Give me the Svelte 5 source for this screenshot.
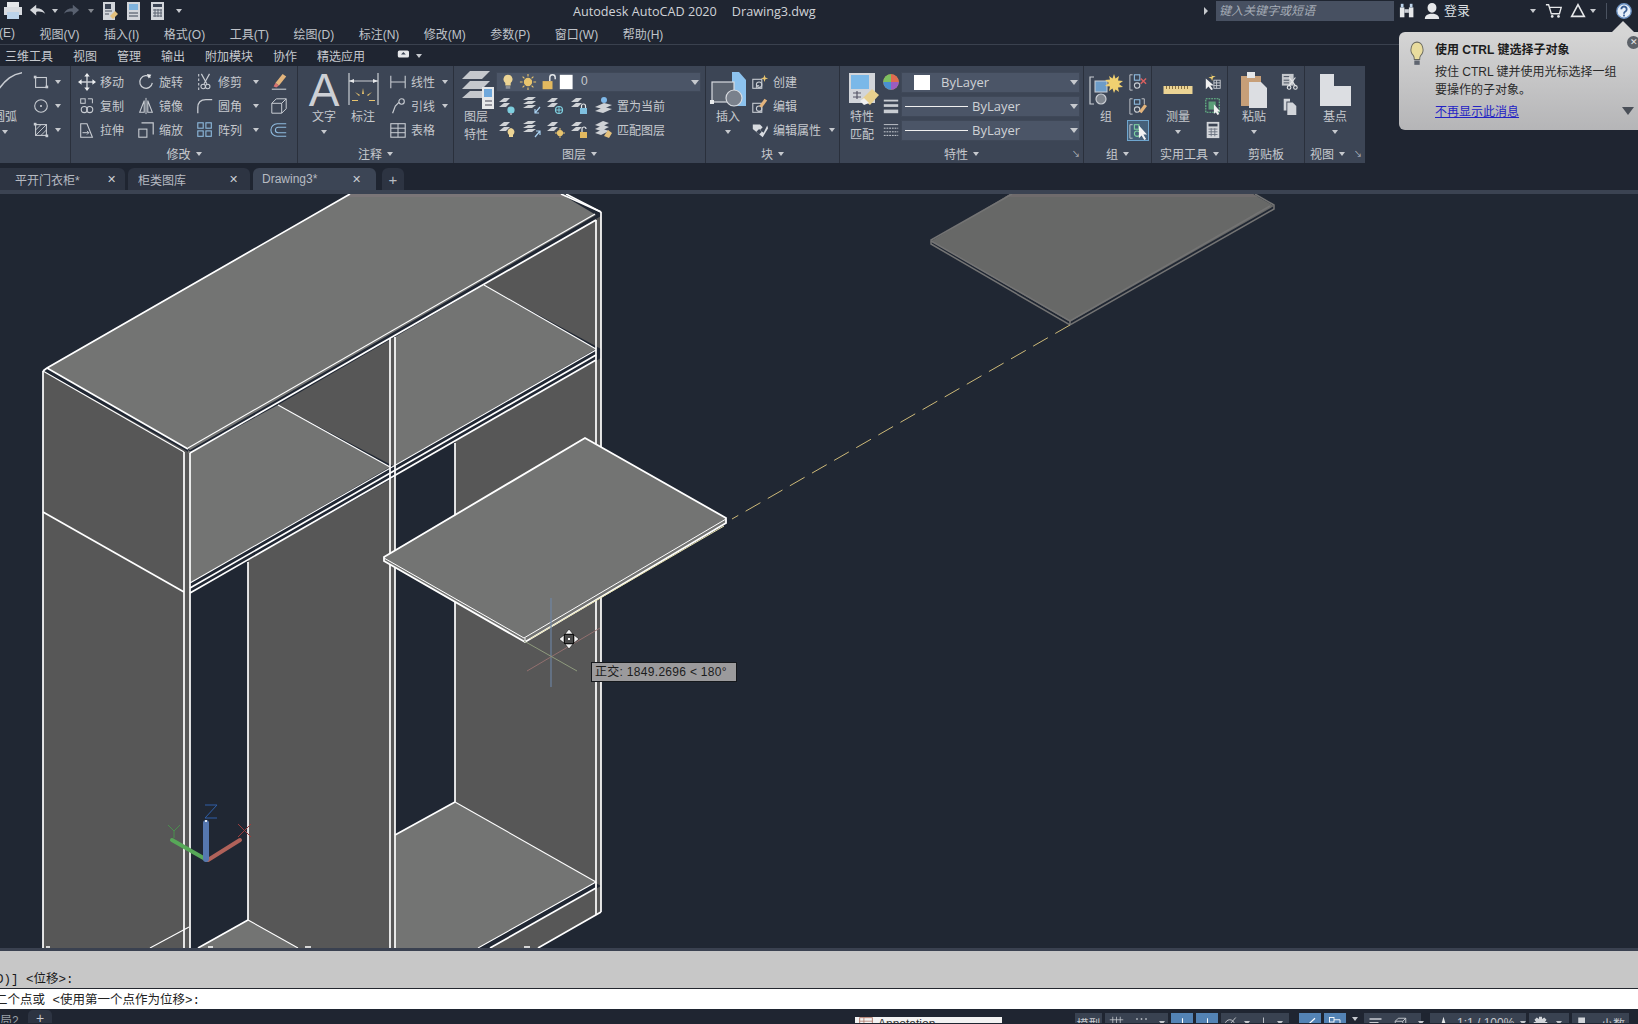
<script>
  const c = '#c9cdd3';
  const L = (d, s = c, w = 1.3) => `<path d="${d}" fill="none" stroke="${s}" stroke-width="${w}"/>`;
  const F = (d, f = c) => `<path d="${d}" fill="${f}"/>`;
  const R = (x, y, w, h, f = c) => `<rect x="${x}" y="${y}" width="${w}" height="${h}" fill="${f}"/>`;
  const O = (x, y, w, h, s = c, sw = 1.2) => `<rect x="${x}" y="${y}" width="${w}" height="${h}" fill="none" stroke="${s}" stroke-width="${sw}"/>`;
  const Ci = (x, y, r, s = c, f = 'none') => `<circle cx="${x}" cy="${y}" r="${r}" fill="${f}" stroke="${s}" stroke-width="1.2"/>`;
  const layerBase = F('M1 6h7l4-4H6zM1 11h7l4-4H6z', '#cfd2d6');
  const I = {
    print: R(4,1,12,5,'#e5e7ea') + R(1,6,18,8,'#d8dbe0') + R(4,11,12,7,'#bcd3ea'),
    undo: F('M1 9l7-6v4c5 0 8 2 10 6-3-2-6-3-10-2v4z','#d5d8dc'),
    redo: F('M19 9l-7-6v4c-5 0-8 2-10 6 3-2 6-3 10-2v4z','#596170'),
    qa1: R(4,1,12,18,'#d2d5da') + R(6,3,6,5,'#3b4454') + L('M6 10h7M6 13h4','#4a5260',1) + F('M11 15l5-5 3 3-5 5z','#e3c07c'),
    qa2: R(4,1,13,18,'#d2d5da') + R(6,3,9,6,'#7fb3dd') + L('M6 12h9M6 15h9','#3b4454',1),
    qa3: R(4,1,13,18,'#d2d5da') + R(6,3,9,3,'#3b4454') + L('M6 9h9M6 12h9M6 15h9M8 8v8M11 8v8M14 8v8','#5a6270',1),
    arc: L('M0 17C6 8 12 3 22 2',c,1.3) + R(20,0,3,3,'#e8eaec'),
    rect: O(4,5,12,11) + R(2,3,3,3) + R(15,14,3,3),
    circ: Ci(10,10,7) + R(9,9,2,2),
    hatch: O(4,4,12,12) + L('M4 10l6-6M4 16L16 4M10 16l6-6',c,1) + R(2,2,3,3) + R(15,15,3,3),
    move: L('M10 2v16M2 10h16',c,1.6) + F('M10 0l3 4H7zM10 20l3-4H7zM0 10l4-3v6zM20 10l-4-3v6z','#eceef0'),
    rot: L('M15 5a7 7 0 1 0 2 6',c,1.4) + F('M11 1l5 1-3 4z','#e6e8ea'),
    trim: L('M6 1l6 11M15 1L9 12',c,1.3) + Ci(8,15,2.5) + Ci(13,15,2.5) + `<path d="M3 1v18" fill="none" stroke="${c}" stroke-width="1.2" stroke-dasharray="3 2"/>`,
    eraser: F('M14 1l4 3-8 10-4-3z','#e3b47c') + F('M6 11l4 3-3 2-3-1z','#d87272') + L('M2 18h16',c,1.2),
    copy: O(3,2,5,5,c,1.1) + L('M11 2h5v5',c,1.1) + Ci(7,14,3.4) + Ci(13,14,3.4),
    mirror: L('M10 1v18',c,1.1) + L('M8 4L3 17h5zM12 4l5 13h-5z',c,1.2),
    fillet: L('M2 18v-6q0-9 9-9h7',c,1.4),
    stretch: L('M3 3h7l6 15H3z',c,1.2) + L('M5 13h7m-2-2l2 2-2 2',c,1.1),
    scale: O(2,9,9,9) + L('M5 2h13v13',c,1.3),
    array: O(2,2,6,6,'#8fbce0') + O(11,2,6,6,'#8fbce0') + O(2,11,6,6,'#8fbce0') + O(11,11,6,6,'#8fbce0'),
    box3: L('M2 7h11v11H2zM2 7l5-5h11v11l-5 5M13 7l5-5',c,1.1),
    off: L('M18 3H8a7 7 0 0 0 0 14h10M18 7H9a3 3 0 0 0 0 6h9','#8fbce0',1.2),
    dimbig: L('M2 0v32M31 0v32M2 8h29',c,1.2) + F('M2 8l5-2v4zM31 8l-5-2v4z','#e6e8ea') + F('M16 15l1 6h-2zM8 19l5 3-1 1zM25 19l-5 3 1 1zM5 27h6v1H5zM22 27h6v1h-6z','#e8c46e'),
    lin: L('M2 3v14M18 3v14M2 10h16',c,1.2),
    lead: L('M4 18l3-8 4-4',c,1.3) + Ci(14,5,3),
    table: O(2,3,16,15) + L('M2 8h16M2 13h16M10 3v15',c,1.1),
    layers: F('M12 0h20l-8 8H4zM12 10h20l-8 8H4zM12 20h18l-6 7H4z','#c5c8cd') + R(24,16,12,22,'#e6e8ea') + R(26,18,8,8,'#6fa8dc') + L('M27 30h7M27 34h7','#445',1.1),
    bulb: F('M10 2a5 5 0 0 1 3 9v3H7v-3a5 5 0 0 1 3-9z','#ecd494') + R(7.5,14.5,5,3,'#8a8f98'),
    sun: Ci(10,10,4,'#e8c46e','#e8c46e') + L('M10 1v3M10 16v3M1 10h3M16 10h3M4 4l2 2M14 14l2 2M4 16l2-2M14 6l2-2','#e8c46e',1.2),
    lock: R(4,9,11,9,'#e3b95f') + L('M12 9V5a3 3 0 0 1 6 0v2','#e6e8ea',1.6),
    w: R(1,1,16,18,'#ffffff'),
    l1: layerBase + Ci(13,14,3,'#7fd0e0','#7fd0e0') + R(12,17,2,2,'#99a'),
    l2: F('M1 4h9l4-3H6zM1 8h9l4-3H6zM1 12h9l4-3H6z','#cfd2d6') + L('M18 11l-5 6m0-4v4h4','#a8d0f0',1.2),
    l3: layerBase + Ci(13,14,3.5,'#7fd0e0') + L('M13 10v8M9.5 14h7','#7fd0e0',1),
    l4: layerBase + R(10,12,7,6,'#7fc0e0') + L('M11.5 12V10a2 2 0 0 1 4 0v2','#e6e8ea',1.2),
    l5: F('M10 1a3 3 0 0 1 3 3 3 3 0 0 1-6 0 3 3 0 0 1 3-3z','#7fb8e8') + F('M1 11l9-4 8 2-9 4zM1 15l9-4 8 2-9 4z','#cfd2d6'),
    l6: layerBase + F('M13 8a4 4 0 0 1 2 7v2h-4v-2a4 4 0 0 1 2-7z','#ecd494'),
    l7: F('M1 4h9l4-3H6zM1 8h9l4-3H6zM1 12h9l4-3H6z','#cfd2d6') + L('M13 17l5-6m0 4v-4h-4','#a8d0f0',1.2),
    l8: layerBase + Ci(14,13,2.5,'#e8c46e','#e8c46e') + L('M14 8v2M14 16v2M9 13h2M17 13h2','#e8c46e',1),
    l9: layerBase + R(10,12,7,6,'#e3b95f') + L('M12 12V9a2 2 0 0 1 4 0','#e6e8ea',1.2),
    l10: F('M1 5l8-4 6 2-8 4zM1 9l8-4 6 2-8 4zM1 13l8-4 6 2-8 4z','#cfd2d6') + F('M10 16l4-6 4 3-3 5z','#e3c07c'),
    insert: F('M22 0h7l7 8v26H22z','#8cc2ee') + R(2,10,22,20,'#5c6470') + O(2,10,22,20,'#d8dbe0',1.2) + Ci(24,26,8,'#d8dbe0','#7a818c') + R(0,28,4,4,'#e8eaec'),
    create: O(2,7,10,10) + L('M6 17v-3h3',c,1) + Ci(9,13,3) + F('M15 2l1 3 3 1-3 1-1 3-1-3-3-1 3-1z','#e8c46e'),
    edit: O(2,7,10,10) + Ci(9,13,3) + F('M15 2l3 2-6 8-3-2z','#e3b47c'),
    attr: F('M2 4h8l3 3-3 3 4 3 4-8 1 3-6 10-11-9z','#d8dbe0') + F('M9 9l3 3-3 3-3-3z','#3b4454'),
    match: R(0,0,26,30,'#d2d5da') + R(2,2,18,14,'#7ab8e8') + L('M4 20h8M4 24h8M8 18v8','#556',1.2) + F('M13 26l10-10 7 6-9 10z','#e8d08e') + F('M11 28l4-3 5 5-5 2z','#f0f0f0'),
    wheel: `<circle cx="10" cy="10" r="8.6" fill="#c8a050"/>` + F('M10 10V1.4A8.6 8.6 0 0 1 18.6 10z','#e06a50') + F('M10 10h8.6A8.6 8.6 0 0 1 10 18.6z','#9c5cc0') + F('M10 10v8.6A8.6 8.6 0 0 1 1.4 10z','#4a90d0') + F('M10 10H1.4A8.6 8.6 0 0 1 10 1.4z','#7dc060'),
    lw: R(2,3,16,2) + R(2,8,16,3) + R(2,14,16,4),
    lt: L('M2 4h16','#c9cdd3',1) + `<path d="M2 8h16M2 12h16M2 16h16" fill="none" stroke="#c9cdd3" stroke-dasharray="2 1" stroke-width="1.1"/>`,
    group: L('M5 3H1v27h4',c,1.2) + R(6,7,12,11,'#6c9cc8') + O(6,7,12,11,'#c9cdd3',1) + Ci(12,25,5,'#c9cdd3','#80868f') + F('M25 0l1.500 4.500L30 2l-1 4.500 5 .5-4 3 4 3-5 .5 1 4.500-3.500-2.500L25 19l-1.500-4.500L20 17l1-4.500-5-.5 4-3-4-3 5-.5L20 2l3.500 2.500z','#f0d070'),
    ung: L('M4 2H1v17h3',c,1) + O(6,2,6,6,'#8fbce0') + Ci(9,14,3,'#c9cdd3') + L('M13 6l6 6m0-6l-6 6','#d86060',1.6),
    gedit: L('M4 2H1v17h3M14 2h3v6',c,1) + O(6,3,6,5,'#8fbce0') + Ci(9,14,3) + F('M17 8l3 2-6 8-3-2z','#e3b47c'),
    gsel: L('M4 3H1v15h3',c,1) + O(6,3,5,5,'#7fd0a0') + Ci(9,13,3,'#7fd0a0') + F('M11 4v14l3-3 3 5 2-1-3-5h4z','#f2f2f2'),
    ruler: R(0,1,29,8,'#ecd494') + L('M3 1v3M6 1v3M9 1v3M12 1v3M15 1v3M18 1v3M21 1v3M24 1v3','#8a7040',1),
    pick: F('M2 6v12l3-3 3 4 2-1-3-4h4z','#f0f0f0') + F('M7 0l2 4-4 1 3 1 1 3 1-4 3-1-4-1z','#f0d070') + O(11,8,7,9,'#c9cdd3',1) + L('M11 11h7M11 14h7M14 8v9',c,1),
    qsel: `<rect x="2" y="2" width="15" height="15" fill="none" stroke="#68c08a" stroke-dasharray="2 1" stroke-width="1.2"/>` + R(5,5,8,9,'#5a9e78') + F('M11 8v11l2-2 2 3 2-1-2-3h3z','#f0f0f0'),
    calc: R(3,1,14,18,'#d2d5da') + R(5,3,10,3,'#3b4454') + L('M5 9h10M5 12h10M5 15h10M8 8v9M12 8v9','#6a7280',1),
    paste: R(0,4,20,30,'#c79f78') + R(6,0,8,6,'#e6e8ea') + F('M8 10h12l6 6v20H8z','#dcdee2'),
    cut: R(1,1,13,13,'#c5c8cd') + L('M3 4h6M3 8h6M3 11h6','#3b4454',1) + L('M9 5l7 9M16 5l-7 9','#e6e8ea',1.2) + Ci(9,16,2,'#e6e8ea') + Ci(16,16,2,'#e6e8ea'),
    dup: F('M3 2h7v3H6v10H3z','#d2d5da') + F('M7 6h6l4 4v10H7z','#d2d5da'),
    base: F('M1 0h14v12h17v20H1z','#dcdee2'),
    bino: R(1,6,5,11,'#e6e8ea') + R(11,6,5,11,'#e6e8ea') + R(6,8,5,4,'#c9cdd3') + R(2,2,3,4,'#bcd3ea') + R(12,2,3,4,'#bcd3ea'),
    user: F('M10 1a4.5 5 0 0 1 0 11 4.5 5 0 0 1 0-11zM2 19q0-5 6-6h4q6 1 6 6z','#e6e8ea'),
    cart: L('M1 3h3l3 10h9l2-7H5','#e6e8ea',1.5) + `<circle cx="8" cy="16" r="1.5" fill="#e6e8ea"/><circle cx="15" cy="16" r="1.5" fill="#e6e8ea"/>`,
    tri: L('M10 3L3 16h14z','#e6e8ea',1.8),
    help: `<circle cx="10" cy="10" r="8" fill="#e6eef8" stroke="#6d93c4" stroke-width="1.5"/>` + L('M7 8a3 3 0 1 1 4.5 2.6c-1 .6-1.5 1-1.5 2.4','#3b5f94',2) + R(9,14,2,2,'#3b5f94'),
    tip: `<path d="M10 1a7 7 0 0 1 4 12.500c-1 1-1 2-1 3.500H7c0-1.500-.3-2.500-1-3.500A7 7 0 0 1 10 1z" fill="#e9dc9e" stroke="#66665c"/>` + R(7,18,6,4,'#5f6570'),
    cam: `<rect x="1" y="3" width="14" height="9" rx="2" fill="#e6e8ea"/><path d="M5 8h6L8 5z" fill="#3b4454"/>`,
    grid: L('M5 1v18M10 1v18M15 1v18M1 5h18M1 10h18M1 15h18',c,1),
    dots: `<g fill="${c}"><rect x="3" y="3" width="2" height="2"/><rect x="9" y="3" width="2" height="2"/><rect x="15" y="3" width="2" height="2"/></g>`,
    plus: L('M10 3v14M3 10h14','#fff',1.4),
    ell: L('M10 3v15h8','#fff',1.3),
    polar: Ci(9,11,6) + L('M3 18L17 2',c,1.2),
    axis: L('M10 2v8M10 10l-7 8M10 10l7 8',c,1.2),
    chk: L('M3 15L16 3','#fff',1.6),
    snap: O(2,2,6,6,'#fff') + L('M8 5h8v12','#fff',1.2),
    lines: R(2,3,16,2) + R(2,8,12,2) + R(2,13,16,2),
    cube: L('M3 7h10v11H3zM3 7l4-4h10v11l-4 4M13 7l4-4',c,1.2),
    anno: F('M10 1l5 17H5z','#e6e8ea'),
    gear: F('M8 1h4v3l3-2 3 3-2 3h3v4h-3l2 3-3 3-3-2v3H8v-3l-3 2-3-3 2-3H1V8h3L2 5l3-3 3 2z','#d2d5da'),
    dec: R(3,2,9,11,'#d2d5da') + R(3,14,5,4,'#d2d5da'),
    sheet: O(1,1,18,15,'#a76a5a') + L('M1 6h18M7 1v15','#a76a5a',1)
  };
  const menus = ['视图(V)', '插入(I)', '格式(O)', '工具(T)', '绘图(D)', '标注(N)', '修改(M)', '参数(P)', '窗口(W)', '帮助(H)'];
  const tabs = ['三维工具', '视图', '管理', '输出', '附加模块', '协作', '精选应用'];
  const light = '#737473';
  const dark = '#575757';
</script>

{#snippet ic(name, size = 18, vb = '0 0 20 20', cls = '')}
  <svg class="ic {cls}" width={size} height={size} viewBox={vb}>{@html I[name]}</svg>
{/snippet}
{#snippet tool(icon, label, arrow = false)}
  <div class="t">{@render ic(icon)}<span>{label}</span>{#if arrow}<i class="ar far"></i>{/if}</div>
{/snippet}
{#snippet big(icon, w, h, vb, lines, arrow = true)}
  <div class="big">
    <div class="bigicon"><svg width={w} height={h} viewBox={vb}>{@html I[icon]}</svg></div>
    {#each lines as l}<div class="bl">{l}</div>{/each}
    {#if arrow}<i class="ar"></i>{/if}
  </div>
{/snippet}
{#snippet title(text, arrow = true)}
  <div class="ptitle">{text}{#if arrow}<i class="ar tarr"></i>{/if}</div>
{/snippet}

<div class="app">
  <header class="titlebar">
    <div class="qat">
      {@render ic('print', 20)}
      {@render ic('undo', 18)}<i class="ar s"></i>
      {@render ic('redo', 18)}<i class="ar s dim"></i>
      {@render ic('qa1', 20)}{@render ic('qa2', 20)}{@render ic('qa3', 20)}<i class="ar eq"></i>
    </div>
    <div class="apptitle"><span>Autodesk AutoCAD 2020</span><span>Drawing3.dwg</span></div>
    <div class="topright">
      <i class="ar right"></i>
      <div class="search">键入关键字或短语</div>
      <span class="tb bino">{@render ic('bino', 18)}</span>
      <span class="tb userb">{@render ic('user', 18)}</span>
      <span class="login">登录</span>
      <i class="ar loginar"></i>
      <span class="tb cartb">{@render ic('cart', 18)}</span>
      <span class="tb trib">{@render ic('tri', 18)}</span>
      <i class="ar triar"></i>
      <span class="vsep"></span>
      <span class="tb helpb">{@render ic('help', 18)}</span>
    </div>
  </header>

  <nav class="menubar"><span class="clip">(E)</span>{#each menus as m}<span>{m}</span>{/each}</nav>

  <nav class="ribbontabs">
    {#each tabs as t}<span>{t}</span>{/each}
    <span class="camwrap">{@render ic('cam', 16)}<i class="ar"></i></span>
  </nav>

  <section class="ribbon">
    <div class="panel p-draw">
      <div class="body">
        <div class="big clipbig">
          <div class="bigicon arcbox">{@render ic('arc', 24)}</div>
          <div class="bl">圆弧</div>
          <i class="ar"></i>
        </div>
        <div class="rows">
          <div class="t">{@render ic('rect')}<i class="ar gap5"></i></div>
          <div class="t">{@render ic('circ')}<i class="ar gap5"></i></div>
          <div class="t">{@render ic('hatch')}<i class="ar gap5"></i></div>
        </div>
      </div>
    </div>

    <div class="panel p-mod">
      <div class="body">
        <div class="rows">{@render tool('move','移动')}{@render tool('copy','复制')}{@render tool('stretch','拉伸')}</div>
        <div class="rows">{@render tool('rot','旋转')}{@render tool('mirror','镜像')}{@render tool('scale','缩放')}</div>
        <div class="rows">{@render tool('trim','修剪',true)}{@render tool('fillet','圆角',true)}{@render tool('array','阵列',true)}</div>
        <div class="rows">
          <div class="t">{@render ic('eraser')}</div>
          <div class="t">{@render ic('box3')}</div>
          <div class="t">{@render ic('off')}</div>
        </div>
      </div>
      {@render title('修改')}
    </div>

    <div class="panel p-ann">
      <div class="body">
        <div class="big textbig"><div class="bigicon biga">A</div><div class="bl">文字</div><i class="ar"></i></div>
        {@render big('dimbig', 33, 34, '0 0 33 34', ['标注'], false)}
        <div class="rows">{@render tool('lin','线性',true)}{@render tool('lead','引线',true)}{@render tool('table','表格')}</div>
      </div>
      {@render title('注释')}
    </div>

    <div class="panel p-lay">
      <div class="body">
        {@render big('layers', 36, 38, '0 0 36 38', ['图层','特性'], false)}
        <div class="rows wide">
          <div class="combo layercombo">
            {@render ic('bulb')}{@render ic('sun')}{@render ic('lock')}{@render ic('w', 16)}
            <span class="zero">0</span>
            <i class="ar cbar"></i>
          </div>
          <div class="t lrow">{@render ic('l1')}{@render ic('l2')}{@render ic('l3')}{@render ic('l4')}{@render ic('l5')}<span>置为当前</span></div>
          <div class="t lrow">{@render ic('l6')}{@render ic('l7')}{@render ic('l8')}{@render ic('l9')}{@render ic('l10')}<span>匹配图层</span></div>
        </div>
      </div>
      {@render title('图层')}
    </div>

    <div class="panel p-blk">
      <div class="body">
        {@render big('insert', 36, 36, '0 0 36 36', ['插入'])}
        <div class="rows">{@render tool('create','创建')}{@render tool('edit','编辑')}{@render tool('attr','编辑属性',true)}</div>
      </div>
      {@render title('块')}
    </div>

    <div class="panel p-prop">
      <div class="body">
        {@render big('match', 30, 33, '0 0 30 33', ['特性','匹配'], false)}
        <div class="rows wide">
          <div class="t prow">{@render ic('wheel')}<div class="combo"><span class="swatch"></span><span class="bytext first">ByLayer</span><i class="ar cbar"></i></div></div>
          <div class="t prow">{@render ic('lw')}<div class="combo"><span class="lineprev"></span><span class="bytext">ByLayer</span><i class="ar cbar"></i></div></div>
          <div class="t prow">{@render ic('lt')}<div class="combo"><span class="lineprev"></span><span class="bytext">ByLayer</span><i class="ar cbar"></i></div></div>
        </div>
      </div>
      {@render title('特性')}
      <i class="expand">↘</i>
    </div>

    <div class="panel p-grp">
      <div class="body">
        {@render big('group', 34, 32, '0 0 34 32', ['组'], false)}
        <div class="rows">
          <div class="t c22">{@render ic('ung')}</div>
          <div class="t c22">{@render ic('gedit')}</div>
          <div class="t c22 sel">{@render ic('gsel')}</div>
        </div>
      </div>
      {@render title('组')}
    </div>

    <div class="panel p-util">
      <div class="body">
        {@render big('ruler', 30, 10, '0 0 29 10', ['测量'])}
        <div class="rows"><div class="t c20">{@render ic('pick')}</div><div class="t c20">{@render ic('qsel')}</div><div class="t c20">{@render ic('calc')}</div></div>
      </div>
      {@render title('实用工具')}
    </div>

    <div class="panel p-clip">
      <div class="body">
        {@render big('paste', 27, 36, '0 0 27 36', ['粘贴'])}
        <div class="rows"><div class="t c20">{@render ic('cut')}</div><div class="t c20">{@render ic('dup')}</div></div>
      </div>
      {@render title('剪贴板', false)}
    </div>

    <div class="panel p-view">
      <div class="body">
        {@render big('base', 32, 32, '0 0 32 32', ['基点'])}
      </div>
      <div class="ptitle vt">视图<i class="ar tarr"></i></div>
      <i class="expand">↘</i>
    </div>
  </section>

  <div class="doctabs">
    <div class="dt d1"><span>平开门衣柜*</span><b>✕</b></div>
    <div class="dt d2"><span>柜类图库</span><b>✕</b></div>
    <div class="dt active"><span>Drawing3*</span><b>✕</b></div>
    <div class="dt addtab">+</div>
  </div>
  <div class="strip"></div>

  <main class="canvas">
    <svg width="1638" height="754" viewBox="0 194 1638 754">
      <g fill={dark}>
        <polygon points="43,371 190,453 190,948 43,948"/>
        <polygon points="278,405 395,337 395,467"/>
        <polygon points="484,285 601,216 601,349"/>
        <polygon points="248,560 395,477 395,948 248,948"/>
        <polygon points="455,441 601,358 601,886 455,802"/>
        <polygon points="490,948 601,886 601,912 538,948"/>
      </g>
      <g fill={light}>
        <polygon points="47,368 350,194 561,194 596,215 190,450"/>
        <polygon points="190,453 278,405 390,467 190,583"/>
        <polygon points="395,337 484,285 596,349 395,465"/>
        <polygon points="395,835 455,802 596,882 478,948 395,948"/>
        <polygon points="248,920 198,948 298,948"/>
        <polygon points="188,450 191,452 191,455 188,453"/>
      </g>
      <polygon points="350,194 561,194 566,197 345,197" fill="#7b7678"/>
      <polygon points="1010,194 1253,194 1274,206 1070,322 931,241" fill="#676867"/>
      <polygon points="1010,194 1253,194 1258,197 1005,197" fill="#6f6b6c"/>
      <g fill="none" stroke="#747474" stroke-width="1.5">
        <polyline points="1012,194 931,240 931,244 1070,325 1274,209 1274,205 1255,194"/>
        <polyline points="931,241 1070,321 1270,206"/>
        <line x1="1070" y1="321" x2="1070" y2="325"/>
      </g>
      <line x1="1070" y1="325" x2="732" y2="519" stroke="#cdb978" stroke-width="1" stroke-dasharray="17 8.500"/>
      <g fill="none" stroke="#fff" stroke-width="1.7">
        <line x1="43" y1="371" x2="43" y2="948"/>
        <line x1="184" y1="452" x2="184" y2="948"/>
        <line x1="190" y1="453" x2="190" y2="948"/>
        <line x1="248" y1="562" x2="248" y2="920"/>
        <line x1="390" y1="338" x2="390" y2="948"/>
        <line x1="395" y1="337" x2="395" y2="948"/>
        <line x1="455" y1="443" x2="455" y2="802"/>
        <line x1="596" y1="220" x2="596" y2="915"/>
        <line x1="601" y1="212" x2="601" y2="912"/>
        <polyline points="43,371 47,368 350,194"/>
        <line x1="47" y1="368" x2="188" y2="449"/>
        <line x1="190" y1="453" x2="596" y2="220"/>
        <line x1="561" y1="194" x2="601" y2="212"/>
        <line x1="566" y1="194" x2="601" y2="212"/>
        <line x1="43" y1="512" x2="184" y2="592"/>
        <line x1="190" y1="593" x2="596" y2="360"/>
        <line x1="190" y1="588" x2="596" y2="355"/>
        <line x1="198" y1="948" x2="248" y2="920"/>
        <line x1="395" y1="835" x2="455" y2="802"/>
        <line x1="490" y1="948" x2="596" y2="888"/>
        <line x1="538" y1="948" x2="601" y2="912"/>
        <path d="M46 947h4M208 947h5M305 947h6M524 947h6"/>
      </g>
      <g fill="none" stroke="#fff" stroke-width="1.1">
        <line x1="43" y1="371" x2="184" y2="452"/>
        <line x1="188" y1="448" x2="595" y2="214"/>
        <line x1="190" y1="583" x2="596" y2="350"/>
        <line x1="278" y1="405" x2="390" y2="467"/>
        <line x1="484" y1="285" x2="596" y2="349"/>
        <line x1="248" y1="920" x2="298" y2="948"/>
        <line x1="455" y1="802" x2="596" y2="882"/>
        <line x1="478" y1="948" x2="596" y2="882"/>
        <line x1="150" y1="948" x2="189" y2="927"/>
        <line x1="596" y1="882" x2="596" y2="888"/>
      </g>
      <polygon points="384,557 585,438 726,518 726,523 525,642 384,561" fill={light}/>
      <g fill="none" stroke="#fff">
        <polygon points="384,557 585,438 726,518 726,523 525,642 384,561" stroke-width="1.8"/>
        <polyline points="384,558 524,638 726,519" stroke-width="1"/>
        <line x1="525" y1="638" x2="525" y2="642" stroke-width="1"/>
      </g>
      <line x1="530" y1="639" x2="724" y2="526" stroke="#e8e2b0" stroke-width="1"/>
      <line x1="551" y1="598" x2="551" y2="687" stroke="#6e87a8" stroke-width="1.1"/>
      <line x1="527" y1="671" x2="600" y2="628" stroke="#93706f" stroke-width="1"/>
      <line x1="524" y1="641" x2="577" y2="671" stroke="#8e9a7d" stroke-width="1"/>
      <g transform="translate(569 639)">
        <path d="M0-10l4 5H-4zM0 10l4-5H-4zM-10 0l5-4V4zM10 0l-5-4V4z" fill="#f2f2f2" stroke="#111" stroke-width=".6"/>
        <rect x="-4.500" y="-4.500" width="9" height="9" fill="#4a4a4a" stroke="#111"/>
        <rect x="-1" y="-1" width="2" height="2" fill="#fff"/>
      </g>
      <g stroke-linecap="round" fill="none">
        <line x1="207" y1="860" x2="172" y2="840" stroke="#57a858" stroke-width="4"/>
        <line x1="208" y1="860" x2="240" y2="840" stroke="#b0625a" stroke-width="4"/>
        <line x1="206" y1="859" x2="206" y2="823" stroke="#5678b0" stroke-width="6"/>
      </g>
      <rect x="205" y="820" width="2" height="2" fill="#dfe6f0"/>
      <g fill="none" stroke-width="1">
        <path d="M205 805h12l-12 13h12" stroke="#2f5fa8"/>
        <path d="M168 825l6 6 6-6M174 831v7" stroke="#4a8f4e"/>
        <path d="M238 824l13 13M251 824l-13 13" stroke="#9a3d3d"/>
      </g>
    </svg>

    <div class="ortho">正交: 1849.2696 &lt; 180°</div>
  </main>

  <footer class="bottom">
    <div class="history">D)] &lt;位移&gt;:</div>
    <div class="cmd">二个点或 &lt;使用第一个点作为位移&gt;:</div>
    <div class="status">
      <span class="layout">局2</span>
      <span class="layoutadd">+</span>
      <div class="sheetbox">{@render ic('sheet', 14)}<span>Annotation</span></div>
      <div class="st model">模型</div>
      <div class="st g1">{@render ic('grid', 15)}{@render ic('dots', 15)}<i class="ar"></i></div>
      <div class="st on">{@render ic('plus', 15)}</div>
      <div class="st on">{@render ic('ell', 15)}</div>
      <div class="st g2">{@render ic('polar', 15)}<i class="ar"></i>{@render ic('axis', 15)}<i class="ar"></i></div>
      <div class="st on chk">{@render ic('chk', 15)}</div>
      <div class="st on">{@render ic('snap', 15)}</div>
      <i class="ar st-ar"></i>
      <div class="st g3">{@render ic('lines', 15)}{@render ic('cube', 15)}<i class="ar"></i></div>
      <div class="st g4">{@render ic('anno', 15)}<span>1:1 / 100%</span><i class="ar"></i></div>
      <div class="st g5">{@render ic('gear', 15)}<i class="ar"></i></div>
      <div class="st g6">{@render ic('dec', 15)}<span>小数</span></div>
    </div>
  </footer>

  <aside class="tip">
    <span class="notch"></span>
    <span class="close">✕</span>
    <div class="tipbulb"><svg width="18" height="26" viewBox="0 0 20 24" preserveAspectRatio="none">{@html I.tip}</svg></div>
    <div class="tiptext">
      <h4>使用 CTRL 键选择子对象</h4>
      <p>按住 CTRL 键并使用光标选择一组<br />要操作的子对象。</p>
      <span class="tiplink">不再显示此消息</span>
    </div>
    <i class="tipmore"></i>
  </aside>
</div>

<style>
  :global(body) { margin: 0; background: #1f2531; }
  .app {
    position: relative; width: 1638px; height: 1024px; overflow: hidden; background: #1f2531;
    font-family: "Liberation Sans", "Noto Sans CJK SC", sans-serif; font-size: 12px; color: #c6c9ce;
    display: flex; flex-direction: column;
  }
  i { font-style: normal; }
  .ic { flex: none; display: block; }
  .ar { display: inline-block; flex: none; width: 0; height: 0; border-left: 3px solid transparent; border-right: 3px solid transparent; border-top: 4px solid #c6c9ce; }

  .titlebar { height: 22px; display: flex; align-items: center; position: relative; flex: none; }
  .qat { display: flex; align-items: center; width: 560px; padding-left: 3px; box-sizing: border-box; }
  .qat .ic:nth-child(2) { margin-left: 6px; }
  .qat .s { margin: 0 4px 0 5px; }
  .qat .dim { margin: 0 5px 0 8px; opacity: .6; }
  .qat .ic:nth-child(6), .qat .ic:nth-child(7) { margin-right: 4px; }
  .qat .ic:nth-child(8) { margin-right: 5px; }
  .qat .eq { margin-left: 4px; }
  .apptitle { display: flex; gap: 15px; margin-left: 13px; font-size: 12.65px; color: #d0d3d8; font-family: "Open Sans", "Liberation Sans", sans-serif; }
  .topright { position: absolute; left: 1204px; top: 0; height: 22px; width: 434px; display: flex; align-items: center; }
  .right { border: 0; border-top: 4px solid transparent; border-bottom: 4px solid transparent; border-left: 4px solid #c6c9ce; width: 0; height: 0; margin-right: 8px; }
  .search { width: 178px; height: 20px; line-height: 20px; background: #475061; font-style: italic; color: #a5acb6; padding-left: 3px; box-sizing: border-box; }
  .tb { display: block; width: 18px; }
  .bino { margin-left: 5px; }
  .userb { margin-left: 6px; }
  .login { margin: 0 0 3px 3px; color: #dde0e4; font-size: 13px; }
  .loginar { margin-left: 60px; }
  .cartb { margin-left: 9px; }
  .trib { margin-left: 6px; }
  .triar { margin-left: 3px; }
  .vsep { width: 1px; height: 16px; background: #4a5260; margin-left: 10px; }
  .helpb { margin-left: 8px; }

  .menubar { height: 22px; flex: none; display: flex; align-items: center; gap: 24.5px; border-bottom: 1px solid #3a414e; color: #bfc3c9; }
  .clip { margin-left: -1px; }
  .ribbontabs { height: 21px; flex: none; display: flex; align-items: center; gap: 20px; padding-left: 5px; color: #c6c9ce; }
  .camwrap { display: flex; align-items: center; gap: 3px; margin-left: 12px; }

  .ribbon { height: 97px; flex: none; display: flex; }
  .panel { position: relative; box-sizing: border-box; height: 97px; background: #3c4555; border-right: 1px solid #2a303c; display: flex; flex-direction: column; }
  .body { height: 79px; padding-top: 4px; box-sizing: border-box; display: flex; flex: none; }
  .rows { display: flex; flex-direction: column; flex: none; }
  .wide { flex: 1; min-width: 0; }
  .t { height: 24px; display: flex; align-items: center; gap: 4px; white-space: nowrap; }
  .t > span { margin-bottom: 2px; }
  .far { margin-left: 7px; }
  .big { width: 36px; display: flex; flex-direction: column; align-items: center; flex: none; }
  .bigicon { height: 39px; display: flex; align-items: center; justify-content: center; }
  .bl { height: 17.5px; line-height: 17.5px; white-space: nowrap; }
  .big .ar { margin-top: 3px; }
  .ptitle { height: 18px; margin-top: -1px; display: flex; align-items: center; justify-content: center; gap: 5px; white-space: nowrap; }
  .tarr { margin-top: 1px; }
  .expand { position: absolute; right: 3px; bottom: 3px; font-size: 8px; line-height: 10px; color: #c6c9ce; }

  .p-draw { width: 71px; }
  .p-draw .body { gap: 15px; }
  .clipbig { width: 34px; margin-left: -17px; align-items: flex-end; }
  .arcbox { margin-right: -5px; justify-content: flex-end; height: 24px; margin-bottom: 15px; }
  .clipbig .ar { margin-right: 9px; }
  .gap5 { margin-left: 1px; }

  .p-mod { width: 227px; }
  .p-mod .body { padding-left: 7px; gap: 13px; }
  .p-mod .rows:last-child { margin-left: -2px; }

  .p-ann { width: 156px; }
  .p-ann .body { padding-left: 11px; gap: 6px; }
  .textbig { width: 30px; }
  .biga { font-size: 46px; line-height: 38px; font-family: "Liberation Sans", sans-serif; color: #cdd0d5; }
  .p-ann .rows { margin-left: 2px; }
  .p-ann .far { margin-left: 3px; }

  .p-lay { width: 252px; }
  .p-lay .body { padding-left: 4px; gap: 2px; padding-right: 5px; }
  .combo { height: 21px; margin-top: 2px; background: #4b5567; display: flex; align-items: center; position: relative; flex: 1; box-shadow: inset 0 0 0 1px #3f4858; }
  .layercombo { flex: none; width: 205px; height: 20px; margin-bottom: 2px; gap: 2px; padding-left: 3px; box-sizing: border-box; }
  .zero { margin-left: 4px; margin-bottom: 2px; }
  .cbar { position: absolute; right: 2px; top: 8px; border-left-width: 4px; border-right-width: 4px; border-top-width: 5px; }
  .lrow { gap: 4px; }
  .lrow .ic { width: 20px; height: 20px; margin-left: 2px; margin-right: -2px; }
  .lrow span { margin-left: 1px; }

  .p-blk { width: 134px; }
  .p-blk .body { padding-left: 4px; gap: 5px; }
  .p-blk .far { margin-left: 4px; }

  .p-prop { width: 244px; }
  .p-prop .body { padding-left: 4px; gap: 2px; padding-right: 3px; }
  .p-prop .bigicon { padding-left: 4px; }
  .prow { gap: 1px; align-items: flex-start; }
  .prow .ic { margin-top: 3px; }
  .prow .combo { width: 179px; flex: none; }
  .swatch { width: 16px; height: 15px; background: #fff; margin-left: 13px; }
  .bytext { margin: 0 0 2px 4px; font-size: 13px; color: #cfd2d6; font-family: "Open Sans", "Liberation Sans", sans-serif; }
  .bytext.first { margin-left: 11px; }
  .lineprev { width: 63px; height: 1px; background: #f0f0f0; margin-left: 4px; }

  .p-grp { width: 68px; }
  .p-grp .body { padding-left: 4px; gap: 3px; }
  .c22 { width: 22px; justify-content: center; box-sizing: border-box; }
  .sel { box-shadow: inset 0 0 0 1px #6fa6cf; background: #45607a; margin-top: 2px; height: 21px; }

  .p-util { width: 76px; }
  .p-util .body { padding-left: 8px; gap: 7px; }
  .c20 { width: 20px; justify-content: center; }

  .p-clip { width: 77px; }
  .p-clip .body { padding-left: 8px; gap: 8px; }

  .p-view { width: 60px; border-right: 0; }
  .p-view .body { padding-left: 12px; }
  .vt { justify-content: flex-start; padding-left: 5px; }

  .doctabs { height: 27px; flex: none; display: flex; align-items: flex-end; gap: 3px; }
  .dt { height: 22px; width: 122px; box-sizing: border-box; background: #2d3442; border-radius: 6px 6px 0 0; display: flex; align-items: center; padding: 0 12px 0 15px; justify-content: space-between; color: #b7bbc2; }
  .d1 { width: 125px; border-top-left-radius: 0; padding-right: 9px; }
  .d2 { padding-left: 10px; }
  .dt b { font-weight: 400; font-size: 11px; color: #c9ccd2; }
  .dt.active { background: #3c4555; width: 123px; padding: 0 15px 0 9px; }
  .addtab { width: 22px; margin-left: 3px; padding: 0; justify-content: center; font-size: 15px; color: #b7bbc2; background: #2d3442; }
  .strip { height: 4px; flex: none; background: #3b4352; }

  .canvas { position: relative; height: 754px; flex: none; background: #202733; overflow: hidden; }
  .canvas svg { display: block; }
  .ortho { position: absolute; left: 591px; top: 468px; width: 146px; height: 20px; box-sizing: border-box; border: 1px solid #15181c; background: #9b9a9c; color: #1c1c1c; font-size: 12px; line-height: 19px; padding-left: 3px; white-space: nowrap; letter-spacing: .3px; }

  .bottom { flex: 1; display: flex; flex-direction: column; border-top: 3px solid #3a4150; }
  .history { height: 38px; background: #c7c7c7; color: #1a1a1a; box-sizing: border-box; border-bottom: 1px solid #23272f; padding-top: 21px; line-height: 16px; font-size: 12.5px; text-indent: -4px; font-family: "Liberation Mono", "Noto Sans CJK SC", monospace; overflow: hidden; }
  .cmd { height: 20px; background: #fff; color: #222; line-height: 25px; flex: none; font-size: 12.5px; text-indent: -5px; overflow: hidden; font-family: "Liberation Mono", "Noto Sans CJK SC", monospace; }
  .status { position: relative; height: 14px; flex: none; display: flex; overflow: hidden; background: #1f2531; padding-left: 1075px; gap: 3px; }
  .layout { position: absolute; left: 0; top: 2px; color: #9aa0a8; }
  .layoutadd { position: absolute; left: 28px; top: 1px; width: 24px; height: 18px; background: #2d3442; text-align: center; border-radius: 5px 5px 0 0; font-size: 14px; line-height: 16px; }
  .sheetbox { position: absolute; left: 855px; top: 8px; width: 147px; height: 12px; background: #f2f2f2; color: #333; display: flex; gap: 5px; padding-left: 4px; box-sizing: border-box; }
  .st { margin-top: 4px; height: 20px; background: #394251; display: flex; align-items: center; flex: none; box-sizing: border-box; white-space: nowrap; }
  .st.on { background: #5383b5; width: 22px; justify-content: center; }
  .st.chk { margin-left: 7px; }
  .model { width: 27px; justify-content: center; }
  .g1 { width: 63px; padding-left: 4px; gap: 10px; }
  .g2 { width: 68px; padding-left: 2px; gap: 6px; }
  .st-ar { margin: 8px 3px 0 3px; }
  .g3 { width: 57px; padding-left: 4px; gap: 10px; }
  .g4 { width: 96px; padding-left: 6px; gap: 6px; margin-left: 6px; }
  .g5 { width: 40px; padding-left: 4px; gap: 8px; }
  .g6 { width: 57px; padding-left: 4px; gap: 10px; }

  .tip { position: absolute; left: 1399px; top: 32px; width: 239px; height: 98px; box-sizing: border-box; border-radius: 6px 0 0 6px; background: linear-gradient(#d5d5d5, #b5b5b7); color: #1c1c1c; display: flex; padding: 9px 0 0 9px; gap: 9px; }
  .notch { position: absolute; left: 213px; top: -11px; width: 0; height: 0; border-left: 11px solid transparent; border-right: 11px solid transparent; border-bottom: 11px solid #d5d5d5; }
  .close { position: absolute; right: -2px; top: 4px; width: 13px; height: 13px; border-radius: 50%; background: #5c6168; color: #e6e6e6; font-size: 9px; line-height: 13px; text-align: center; }
  .tipbulb { width: 18px; flex: none; }
  .tiptext { flex: 1; }
  .tiptext h4 { margin: 0; font-size: 12px; line-height: 18px; font-weight: 700; }
  .tiptext p { margin: 4px 0 0; line-height: 18px; font-size: 12px; color: #2a2a2a; }
  .tiplink { display: block; margin-top: 4px; color: #2222c4; text-decoration: underline; line-height: 18px; }
  .tipmore { position: absolute; right: 4px; bottom: 15px; width: 0; height: 0; border-left: 6px solid transparent; border-right: 6px solid transparent; border-top: 8px solid #4a4f58; }
</style>
